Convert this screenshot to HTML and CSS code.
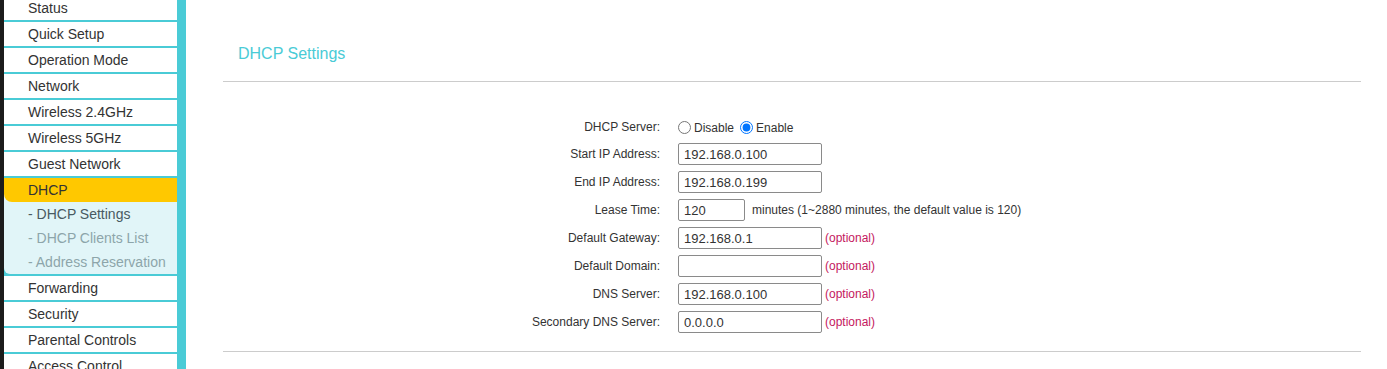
FILE: index.html
```html
<!DOCTYPE html>
<html>
<head>
    <meta charset="UTF-8">
    <title>DHCP Settings</title>
    <link rel="stylesheet" href="styles.css">
</head>
<body>
    <div class="page">
        <ul class="menu">
            <li class="item">Status</li>
            <li class="item">Quick Setup</li>
            <li class="item">Operation Mode</li>
            <li class="item">Network</li>
            <li class="item">Wireless 2.4GHz</li>
            <li class="item">Wireless 5GHz</li>
            <li class="item">Guest Network</li>
            <li class="group">
                <div class="item active">DHCP</div>
                <div class="sub current">- DHCP Settings</div>
                <div class="sub">- DHCP Clients List</div>
                <div class="sub">- Address Reservation</div>
            </li>
            <li class="item">Forwarding</li>
            <li class="item">Security</li>
            <li class="item">Parental Controls</li>
            <li class="item">Access Control</li>
        </ul>

        <div class="main">
            <h2 class="title">DHCP Settings</h2>
            <div class="form">
                <label class="lbl first">DHCP Server:</label>
                <div class="field radios first">
                    <input type="radio" name="dhcp" id="dis"><span>Disable</span>
                    <input type="radio" name="dhcp" id="en" checked><span>Enable</span>
                </div>

                <label class="lbl">Start IP Address:</label>
                <div class="field"><input class="txt" type="text" value="192.168.0.100"></div>

                <label class="lbl">End IP Address:</label>
                <div class="field"><input class="txt" type="text" value="192.168.0.199"></div>

                <label class="lbl">Lease Time:</label>
                <div class="field"><input class="txt short" type="text" value="120"><span class="note">minutes (1~2880 minutes, the default value is 120)</span></div>

                <label class="lbl">Default Gateway:</label>
                <div class="field"><input class="txt" type="text" value="192.168.0.1"><span class="opt">(optional)</span></div>

                <label class="lbl">Default Domain:</label>
                <div class="field"><input class="txt" type="text" value=""><span class="opt">(optional)</span></div>

                <label class="lbl">DNS Server:</label>
                <div class="field"><input class="txt" type="text" value="192.168.0.100"><span class="opt">(optional)</span></div>

                <label class="lbl">Secondary DNS Server:</label>
                <div class="field"><input class="txt" type="text" value="0.0.0.0"><span class="opt">(optional)</span></div>
            </div>
        </div>
    </div>
</body>
</html>
```

FILE: styles.css
```css
html, body {
    margin: 0;
    padding: 0;
    height: 100%;
    overflow: hidden;
    background: #ffffff;
}

body {
    font-family: Arial, 'Liberation Sans', sans-serif;
    color: #333333;
}

.page {
    display: flex;
    align-items: flex-start;
}

/* left menu */
.menu {
    list-style: none;
    margin: -4px 0 0 0;
    padding: 0 9px 0 0;
    width: 173px;
    min-height: 420px;
    background: #4acbd6;
    border-left: 4px solid #1c1c1c;
}

.menu .item {
    height: 24px;
    line-height: 24px;
    padding-left: 24px;
    background: #ffffff;
    font-size: 14px;
    color: #333333;
    margin-bottom: 2px;
}

.menu .group {
    background: #e1f5f8;
    margin-bottom: 2px;
    border-bottom-left-radius: 6px;
}

.menu .group .item {
    margin-bottom: 0;
}

.menu .item.active {
    background: #ffc800;
    border-bottom-left-radius: 8px;
}

.menu .sub {
    height: 24px;
    line-height: 24px;
    padding-left: 24px;
    font-size: 14px;
    color: #8da5aa;
}

.menu .sub.current {
    color: #485a62;
}

/* main panel */
.main {
    flex: 1;
    margin: 0 26px 0 37px;
}

.title {
    margin: 0;
    padding: 45px 0 0 15px;
    height: 36px;
    font-size: 16px;
    font-weight: normal;
    line-height: 18px;
    color: #4acbd6;
    border-bottom: 1px solid #cccccc;
}

.form {
    display: grid;
    grid-template-columns: 437px auto;
    column-gap: 18px;
    row-gap: 6px;
    padding: 36px 0 18px 0;
    border-bottom: 1px solid #cccccc;
    font-size: 12px;
}

.lbl {
    text-align: right;
    line-height: 22px;
    height: 22px;
}

.field {
    display: flex;
    align-items: center;
    height: 22px;
}

.lbl.first {
    height: 19px;
    line-height: 19px;
}

.field.first {
    height: 19px;
}

.radios input {
    margin: 0 3px 0 0;
    width: 13px;
    height: 13px;
}

.radios span {
    margin-right: 6px;
}

.txt {
    box-sizing: border-box;
    width: 144px;
    height: 22px;
    margin: 0;
    padding: 0 5px;
    border: 1px solid #8a8a8a;
    border-radius: 2px;
    font-family: Arial, 'Liberation Sans', sans-serif;
    font-size: 13px;
    color: #333333;
}

.txt.short {
    width: 67px;
}

.note {
    margin-left: 7px;
}

.opt {
    margin-left: 3px;
    color: #c41860;
}
```
